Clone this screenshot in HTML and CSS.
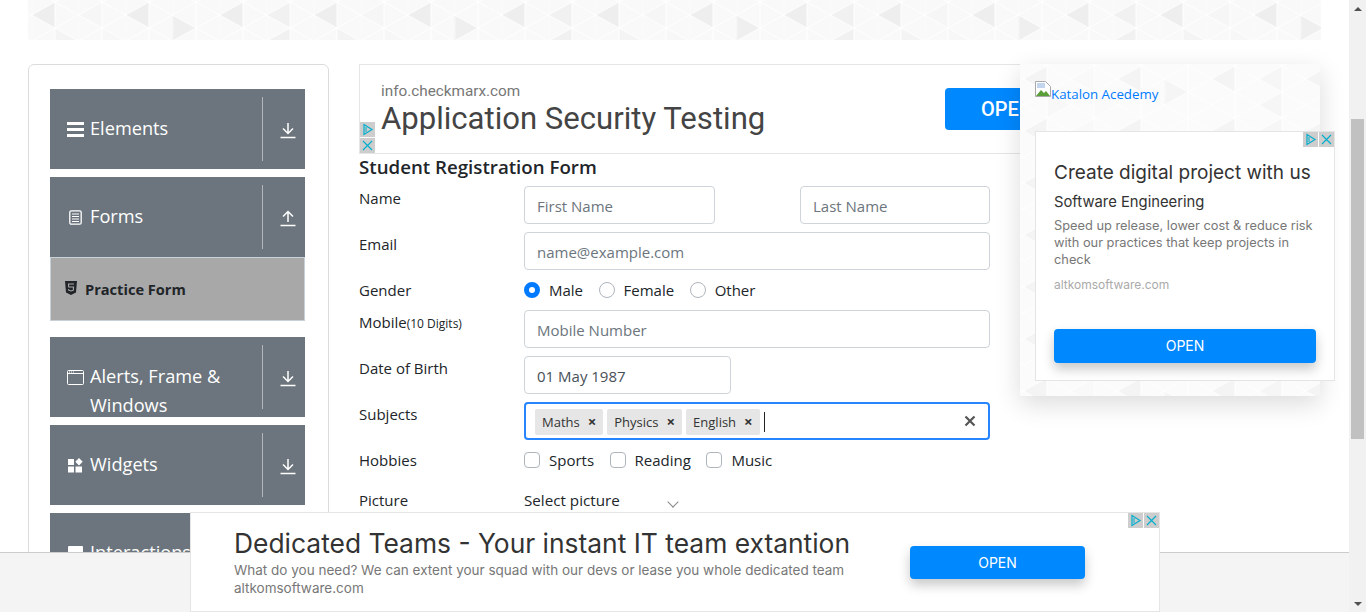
FILE: index.html
```html
<!DOCTYPE html>
<html lang="en">
<head>
  <meta charset="UTF-8">
  <title>Practice Form</title>
  <link rel="stylesheet" href="styles.css">
</head>
<body>
  <svg class="defs" width="0" height="0">
    <defs>
      <pattern id="tri-lines" x="3.500" y="2" width="47" height="26" patternUnits="userSpaceOnUse">
        <path d="M0 13L23.500 0M0 13L23.500 26M23.500 0L47 13M23.500 26L47 13M0 0V26M23.500 0V26" stroke="#fff" stroke-width="0.900" fill="none"/>
      </pattern>
      <pattern id="tri" width="282" height="52" patternUnits="userSpaceOnUse">
        <rect width="282" height="52" fill="#f9f9f9"/>
        <polygon points="3.500,15 27,2 27,28" fill="#eeeeee"/>
        <polygon points="50.500,15 74,2 74,28" fill="#f6f6f6"/>
        <polygon points="97.500,15 121,2 121,28" fill="#eeeeee"/>
        <polygon points="144.500,15 168,28 144.500,41" fill="#efefef"/>
        <polygon points="191.500,15 215,2 215,28" fill="#eeeeee"/>
        <polygon points="238.500,15 262,2 262,28" fill="#f1f1f1"/>
        <polygon points="27,28 50.500,41 27,54" fill="#f4f4f4"/>
        <polygon points="74,28 97.500,41 74,54" fill="#f7f7f7"/>
        <polygon points="238.500,41 262,28 262,54" fill="#f1f1f1"/>
        <rect width="282" height="52" fill="url(#tri-lines)"/>
      </pattern>
      <g id="arrow-down"><path d="M8 1v10M3 6.500l5 5 5-5M0.500 15.500h15" fill="none" stroke="#fff" stroke-width="1.500"/></g>
      <g id="arrow-up"><path d="M8 12V2M3 6.500l5-5 5 5M0.500 15.500h15" fill="none" stroke="#fff" stroke-width="1.500"/></g>
      <g id="ad-play"><path d="M4 2.500v10l8-5z" fill="none" stroke="#00aecd" stroke-width="1.200"/><path d="M6 5v5" stroke="#00aecd" stroke-width="1"/></g>
      <g id="ad-x"><path d="M3 3l9 9M12 3l-9 9" fill="none" stroke="#00aecd" stroke-width="1.200"/></g>
    </defs>
  </svg>

  <div class="page">
    <div class="content">
      <div class="banner">
        <svg class="banner-bg" width="100%" height="100%"><rect width="100%" height="100%" fill="url(#tri)"/></svg>
        <div class="banner-title">Forms</div>
      </div>

      <div class="columns">
        <aside class="sidebar">
          <div class="group">
            <div class="group-title">
              <svg class="group-icon" viewBox="0 0 17 15" width="17" height="15"><path d="M0 0h17v3H0zM0 6h17v3H0zM0 12h17v3H0z" fill="#fff"/></svg>
              <span>Elements</span>
            </div>
            <div class="group-toggle"><svg width="16" height="17" viewBox="0 0 16 17"><use href="#arrow-down"/></svg></div>
          </div>

          <div class="group">
            <div class="group-title">
              <svg class="group-icon" viewBox="0 0 17 15" width="17" height="15"><rect x="2.800" y="0.800" width="11.400" height="13.400" rx="1.500" fill="none" stroke="#fff" stroke-width="1.300"/><path d="M5 4h7M5 6.500h7M5 9h7M5 11.500h7" stroke="#fff" stroke-width="1"/></svg>
              <span>Forms</span>
            </div>
            <div class="group-toggle"><svg width="16" height="17" viewBox="0 0 16 17"><use href="#arrow-up"/></svg></div>
          </div>
          <div class="sub-item">
            <svg class="sub-icon" viewBox="0 0 12 14" width="12" height="14"><path d="M0 0h12l-1 11.500L6 14l-5-2.500z" fill="#212529"/><path d="M9 3H3.500l.2 3H8.500l-.2 3.200L6 10l-2.300-.8-.1-1.200" fill="none" stroke="#a8a8a8" stroke-width="1.100"/></svg>
            <span>Practice Form</span>
          </div>

          <div class="group group-after-sub">
            <div class="group-title">
              <svg class="group-icon" viewBox="0 0 17 15" width="17" height="15"><rect x="0.500" y="0.500" width="16" height="14" rx="1" fill="none" stroke="#fff"/><path d="M0.500 3.500h16" stroke="#fff"/><path d="M2 2h1M4 2h1M6 2h1" stroke="#fff"/></svg>
              <span>Alerts, Frame &amp; Windows</span>
            </div>
            <div class="group-toggle"><svg width="16" height="17" viewBox="0 0 16 17"><use href="#arrow-down"/></svg></div>
          </div>

          <div class="group">
            <div class="group-title">
              <svg class="group-icon" viewBox="0 0 17 15" width="17" height="15"><path d="M1 1h6v6H1zM1 8.500h6v6H1zM8.500 8.500h6.500v6H8.500z" fill="#fff"/><path d="M12 0l3.700 3.700L12 7.400 8.300 3.700z" fill="#fff"/></svg>
              <span>Widgets</span>
            </div>
            <div class="group-toggle"><svg width="16" height="17" viewBox="0 0 16 17"><use href="#arrow-down"/></svg></div>
          </div>

          <div class="group">
            <div class="group-title">
              <svg class="group-icon" viewBox="0 0 17 15" width="17" height="15"><rect x="1" y="0" width="15" height="15" rx="1" fill="#fff"/></svg>
              <span>Interactions</span>
            </div>
            <div class="group-toggle"><svg width="16" height="17" viewBox="0 0 16 17"><use href="#arrow-down"/></svg></div>
          </div>
        </aside>

        <main class="main">
          <div class="top-ad">
            <div class="ad-marks-col">
              <span class="ad-mark"><svg width="15" height="15"><use href="#ad-play"/></svg></span>
              <span class="ad-mark"><svg width="15" height="15"><use href="#ad-x"/></svg></span>
            </div>
            <div class="top-ad-text">
              <div class="top-ad-domain">info.checkmarx.com</div>
              <div class="top-ad-title">Application Security Testing</div>
            </div>
            <div class="top-ad-btn">OPEN</div>
          </div>

          <h5 class="form-title">Student Registration Form</h5>

          <form class="form">
            <label class="lbl">Name</label>
            <div class="name-fields">
              <input class="input" placeholder="First Name">
              <input class="input" placeholder="Last Name">
            </div>

            <label class="lbl">Email</label>
            <input class="input" placeholder="name@example.com">

            <label class="lbl">Gender</label>
            <div class="choices">
              <span class="choice"><i class="radio radio-on"></i>Male</span>
              <span class="choice"><i class="radio"></i>Female</span>
              <span class="choice"><i class="radio"></i>Other</span>
            </div>

            <label class="lbl">Mobile<small class="lbl-note">(10 Digits)</small></label>
            <input class="input" placeholder="Mobile Number">

            <label class="lbl">Date of Birth</label>
            <input class="input input-date" value="01 May 1987">

            <label class="lbl">Subjects</label>
            <div class="subjects">
              <span class="chip">Maths<b class="chip-x">×</b></span>
              <span class="chip">Physics<b class="chip-x">×</b></span>
              <span class="chip">English<b class="chip-x">×</b></span>
              <i class="caret"></i>
              <svg class="clear" width="12" height="12" viewBox="0 0 12 12"><path d="M1.500 1.500l9 9M10.500 1.500l-9 9" stroke="#555" stroke-width="2.200"/></svg>
            </div>

            <label class="lbl">Hobbies</label>
            <div class="choices hobbies">
              <span class="choice"><i class="check"></i>Sports</span>
              <span class="choice"><i class="check"></i>Reading</span>
              <span class="choice"><i class="check"></i>Music</span>
            </div>

            <label class="lbl lbl-picture">Picture</label>
            <div class="picture">Select picture</div>
          </form>
        </main>
      </div>
    </div>

    <div class="scrollbar">
      <span class="scroll-up"></span>
      <div class="track"><div class="thumb"></div></div>
      <span class="scroll-down"></span>
    </div>

    <!-- side ad over the top banner -->
    <div class="side-panel">
      <svg class="banner-bg side-bg" width="100%" height="100%"><rect width="100%" height="100%" fill="url(#tri)"/></svg>
      <a class="side-link">
        <svg width="16" height="16" viewBox="0 0 16 16"><path d="M0.500 0.500h10l5 5v10H0.500z" fill="#fff" stroke="#a9a9a9"/><path d="M1 15l5-6 3 3 2-2 4 5z" fill="#5a9e3a"/><path d="M2 2h8v5H2z" fill="#c3d5ee"/></svg>
        <span class="side-link-text">Katalon Acedemy</span>
      </a>
      <div class="side-ad">
        <div class="ad-marks-row">
          <span class="ad-mark"><svg width="15" height="15"><use href="#ad-play"/></svg></span>
          <span class="ad-mark"><svg width="15" height="15"><use href="#ad-x"/></svg></span>
        </div>
        <div class="side-ad-title">Create digital project with us</div>
        <div class="side-ad-sub">Software Engineering</div>
        <div class="side-ad-desc">Speed up release, lower cost &amp; reduce risk with our practices that keep projects in check</div>
        <div class="side-ad-domain">altkomsoftware.com</div>
        <div class="ad-btn side-ad-btn">OPEN</div>
      </div>
    </div>

    <div class="bottom-band"></div>
    <div class="bottom-ad">
      <div class="ad-marks-row">
        <span class="ad-mark"><svg width="15" height="15"><use href="#ad-play"/></svg></span>
        <span class="ad-mark"><svg width="15" height="15"><use href="#ad-x"/></svg></span>
      </div>
      <div class="bottom-ad-text">
        <div class="bottom-ad-title">Dedicated Teams - Your instant IT team extantion</div>
        <div class="bottom-ad-desc">What do you need? We can extent your squad with our devs or lease you whole dedicated team</div>
        <div class="bottom-ad-desc">altkomsoftware.com</div>
      </div>
      <div class="ad-btn bottom-ad-btn">OPEN</div>
    </div>
  </div>
</body>
</html>
```

FILE: styles.css
```css
html, body {
  margin: 0;
  padding: 0;
  height: 100%;
  overflow: hidden;
}
body {
  font-family: "Open Sans", "Noto Sans", sans-serif;
  font-size: 15px;
  color: #212529;
  background-color: #fff;
}
.defs {
  position: absolute;
}
.page {
  position: relative;
  display: flex;
  height: 612px;
  overflow: hidden;
}
.content {
  flex: 1;
  min-width: 0;
  overflow: hidden;
}

/* top banner */
.banner {
  position: relative;
  height: 40px;
  margin: 0 28px 24px 28px;
  overflow: hidden;
}
.banner-bg {
  position: absolute;
  top: 0;
  left: 0;
}
.banner-title {
  position: relative;
  text-align: center;
  margin-top: -49px;
  height: 50px;
  line-height: 50px;
  font-size: 56px;
  font-weight: 500;
  color: #777;
}

.columns {
  display: flex;
  gap: 30px;
  padding-left: 28px;
}

/* sidebar */
.sidebar {
  flex: none;
  box-sizing: border-box;
  width: 301px;
  height: 640px;
  border: 1px solid #dcdcdc;
  border-radius: 6px;
  padding: 24px 23px 0 21px;
}
.group {
  display: flex;
  height: 80px;
  margin-bottom: 8px;
  background-color: #6c757d;
  color: #fff;
  overflow: hidden;
}
.group-after-sub {
  margin-top: 16px;
}
.group-title {
  flex: none;
  box-sizing: border-box;
  width: 212px;
  padding: 25px 10px 0 17px;
  display: flex;
  gap: 6px;
  font-size: 18.200px;
  line-height: 29px;
}
.group-icon {
  flex: none;
  margin-top: 8px;
}
.group-toggle {
  flex: 1;
  margin: 8px 0;
  border-left: 1px solid #b4b8bb;
  display: flex;
  align-items: center;
  justify-content: center;
  padding-top: 3px;
  padding-left: 8px;
  height: 61px;
}
.sub-item {
  box-sizing: border-box;
  height: 64px;
  margin-top: -8px;
  background-color: #a8a8a8;
  border: 1px solid #c8d0d8;
  display: flex;
  align-items: center;
  gap: 8px;
  padding-left: 14px;
  font-size: 14.600px;
  font-weight: 700;
  color: #212529;
}
.sub-icon {
  flex: none;
  margin-top: -3px;
}

/* form */
.main {
  flex: 1;
  min-width: 0;
}
.top-ad {
  position: relative;
  box-sizing: border-box;
  width: 730px;
  height: 90px;
  border: 1px solid #e5e5e5;
  border-right: 0;
  display: flex;
}
.ad-marks-col {
  position: absolute;
  left: 0;
  bottom: 0;
  display: flex;
  flex-direction: column;
  gap: 1px;
}
.ad-marks-row {
  position: absolute;
  top: 0;
  right: 0;
  display: flex;
  gap: 1px;
}
.ad-mark {
  display: block;
  width: 15px;
  height: 15px;
  background-color: #cdcdcd;
}
.ad-mark svg {
  display: block;
}
.top-ad-text {
  padding: 17px 0 0 21px;
  width: 564px;
  font-family: Roboto, sans-serif;
}
.top-ad-domain {
  font-size: 15.300px;
  line-height: 18px;
  color: #777;
}
.top-ad-title {
  margin-top: 1px;
  font-size: 31.100px;
  line-height: 36px;
  color: #444;
}
.top-ad-btn {
  margin-top: 23px;
  width: 124px;
  height: 42px;
  line-height: 42px;
  text-align: center;
  border-radius: 4px;
  background-color: #0088ff;
  color: #fff;
  font-family: Roboto, sans-serif;
  font-size: 20px;
  font-weight: 500;
}
.form-title {
  margin: 0 0 6px 0;
  font-size: 18.700px;
  line-height: 26px;
  font-weight: 600;
}
.form {
  display: grid;
  grid-template-columns: 165px 466px;
  row-gap: 8px;
}
.lbl {
  line-height: 24px;
}
.lbl-note {
  font-size: 12px;
}
.input {
  box-sizing: border-box;
  width: 100%;
  height: 38px;
  padding: 2px 12px 0 12px;
  border: 1px solid #ced4da;
  border-radius: 4px;
  font-family: inherit;
  font-size: 15px;
  color: #495057;
}
.input::placeholder {
  color: #6c757d;
}
.input-date {
  width: 207px;
}
.name-fields {
  display: flex;
  justify-content: space-between;
}
.name-fields .input {
  width: 191px;
}
.name-fields .input:last-child {
  width: 190px;
}
.choices {
  display: flex;
  line-height: 24px;
}
.choice {
  display: flex;
  align-items: center;
  gap: 9px;
  margin-right: 15.500px;
}
.radio, .check {
  box-sizing: border-box;
  display: block;
  width: 16px;
  height: 16px;
  border: 1px solid #adb5bd;
  background-color: #fff;
}
.radio {
  border-radius: 50%;
}
.radio-on {
  border: 5px solid #007bff;
}
.check {
  border-radius: 4px;
}
.subjects {
  box-sizing: border-box;
  height: 38px;
  border: 2px solid #2684ff;
  border-radius: 4px;
  display: flex;
  align-items: center;
  padding-left: 9px;
  gap: 4px;
}
.chip {
  display: flex;
  align-items: center;
  justify-content: space-between;
  box-sizing: border-box;
  height: 26px;
  margin-top: 1px;
  padding: 0 7px;
  background-color: #e6e6e6;
  border-radius: 2px;
  font-size: 13px;
  color: #333;
  gap: 8px;
}
.chip-x {
  font-size: 15px;
  line-height: 15px;
}
.caret {
  width: 1px;
  height: 20px;
  margin-top: 1px;
  background-color: #222;
}
.clear {
  margin-left: auto;
  margin-right: 12px;
}
.lbl-picture {
  margin-top: 8px;
}
.picture {
  position: relative;
  margin-top: 8px;
  line-height: 24px;
  font-size: 15.200px;
}
.picture::after {
  content: "";
  position: absolute;
  left: 145px;
  top: 10px;
  width: 7px;
  height: 7px;
  border-right: 1px solid #888;
  border-bottom: 1px solid #888;
  transform: rotate(45deg);
}

/* scrollbar */
.scrollbar {
  flex: none;
  width: 17px;
  display: flex;
  flex-direction: column;
  background-color: #f1f1f1;
}
.scroll-up, .scroll-down {
  flex: none;
  height: 17px;
  display: flex;
  align-items: center;
  justify-content: center;
}
.scroll-up::before {
  content: "";
  border: 4px solid transparent;
  border-top: 0;
  border-bottom: 4px solid #505050;
}
.scroll-down::before {
  content: "";
  border: 4px solid transparent;
  border-bottom: 0;
  border-top: 4px solid #505050;
}
.track {
  flex: 1;
  padding: 102px 2px 0 2px;
}
.thumb {
  height: 320px;
  background-color: #c1c1c1;
}

/* overlays */
.side-panel {
  position: absolute;
  left: 1020px;
  top: 64px;
  box-sizing: border-box;
  width: 300px;
  height: 332px;
  padding: 17px 0 0 15px;
  background-color: #fff;
  box-shadow: 0 8px 24px rgba(0, 0, 0, 0.14);
}
.side-bg {
  opacity: 0.6;
}
.side-link {
  position: relative;
  display: flex;
  align-items: flex-start;
  height: 50px;
  font-size: 13.300px;
  line-height: 16px;
  color: #007bff;
}
.side-link svg {
  flex: none;
}
.side-link-text {
  margin-top: 5px;
}
.side-ad {
  position: relative;
  box-sizing: border-box;
  width: 300px;
  height: 250px;
  padding: 28px 18px 0 18px;
  background-color: #fff;
  border: 1px solid #e5e5e5;
  font-family: Inter, sans-serif;
}
.side-ad-title {
  font-size: 19px;
  line-height: 26px;
  color: #333;
}
.side-ad-sub {
  margin-top: 6px;
  font-size: 14.800px;
  line-height: 20px;
  color: #333;
}
.side-ad-desc {
  margin-top: 5px;
  font-size: 12.800px;
  line-height: 17px;
  color: #777;
}
.side-ad-domain {
  margin-top: 8px;
  font-size: 12px;
  line-height: 17px;
  color: #aaa;
}
.ad-btn {
  border-radius: 4px;
  background-color: #0088ff;
  color: #fff;
  text-align: center;
  font-size: 14px;
  box-shadow: 0 6px 12px rgba(0, 0, 0, 0.22);
}
.side-ad-btn {
  margin-top: 36px;
  width: 262px;
  height: 34px;
  line-height: 34px;
}
.bottom-band {
  position: absolute;
  left: 0;
  top: 552px;
  width: 1349px;
  height: 60px;
  box-sizing: border-box;
  background-color: #f4f4f4;
  border-top: 1px solid #ccc;
}
.bottom-ad {
  position: absolute;
  left: 190px;
  top: 512px;
  box-sizing: border-box;
  width: 970px;
  height: 100px;
  background-color: #fff;
  border: 1px solid #e5e5e5;
  display: flex;
  font-family: Inter, sans-serif;
}
.bottom-ad-text {
  box-sizing: border-box;
  padding: 14px 0 0 43px;
  width: 719px;
}
.bottom-ad-title {
  font-size: 26.400px;
  line-height: 32px;
  color: #333;
  margin-bottom: 2px;
}
.bottom-ad-desc {
  font-size: 13.500px;
  line-height: 18px;
  color: #777;
}
.bottom-ad-btn {
  margin-top: 33px;
  width: 175px;
  height: 33px;
  line-height: 33px;
}
```
